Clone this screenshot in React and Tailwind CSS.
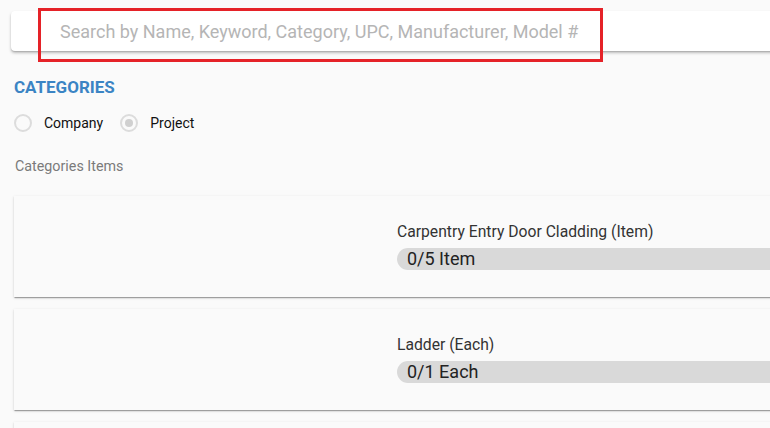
import React from "react";

function Radio({ label, checked }) {
  return (
    <label className="flex items-center">
      <span className="flex h-[18px] w-[18px] items-center justify-center rounded-full border-2 border-[#dcdcdc] bg-[#fafafa]">
        {checked && <span className="h-[8px] w-[8px] rounded-full bg-[#d0d0d0]" />}
      </span>
      <span className="ml-[12px] text-[14px] leading-[18px] text-[#111]">{label}</span>
    </label>
  );
}

function ItemCard({ title, progress }) {
  return (
    <div className="flex h-[101px] w-[800px] shrink-0 bg-[#fafafa] shadow-[0_2px_1px_-1px_rgba(0,0,0,0.2),0_1px_1px_0_rgba(0,0,0,0.14),0_1px_3px_0_rgba(0,0,0,0.12)]">
      <div className="w-[383px] shrink-0" />
      <div className="flex flex-1 flex-col pt-[26px]">
        <div className="text-[15.7px] leading-[20px] text-[#333]">{title}</div>
        <div className="mt-[6px] flex h-[22px] items-center rounded-l-full bg-[#d9d9d9] pl-[10px] text-[18px] leading-[22px] text-[#222]">
          {progress}
        </div>
      </div>
    </div>
  );
}

export default function App() {
  return (
    <div
      className="relative h-[428px] w-[770px] overflow-hidden bg-[#fafafa]"
      style={{ fontFamily: "Roboto, 'Liberation Sans', sans-serif" }}
    >
      <div className="pl-[11px] pt-[11px]">
        <div className="flex h-[40px] w-[800px] items-center rounded-[4px] bg-white shadow-[0_2px_3px_0_rgba(0,0,0,0.25),0_1px_1px_0_rgba(0,0,0,0.1)]">
          <input
            className="h-full w-full bg-transparent pl-[49px] text-[18px] text-[#333] outline-none placeholder:text-[#b5b5b5]"
            placeholder="Search by Name, Keyword, Category, UPC, Manufacturer, Model #"
          />
        </div>
      </div>
      <div className="pointer-events-none absolute left-[38px] top-[8px] h-[54px] w-[565px] border-[3px] border-[#e52228]" />

      <div className="px-[14px]">
        <div className="mt-[26px] text-[17px] font-bold leading-[20px] text-[#3b84c4]">CATEGORIES</div>
        <div className="mt-[17px] flex items-center gap-[17px]">
          <Radio label="Company" />
          <Radio label="Project" checked />
        </div>
        <div className="mt-[25px] pl-[1px] text-[14.3px] leading-[18px] text-[#7a7a7a]">Categories Items</div>
        <div className="mt-[21px] flex flex-col gap-[12px]">
          <ItemCard title="Carpentry Entry Door Cladding (Item)" progress="0/5 Item" />
          <ItemCard title="Ladder (Each)" progress="0/1 Each" />
          <ItemCard title="" progress="" />
        </div>
      </div>
    </div>
  );
}
